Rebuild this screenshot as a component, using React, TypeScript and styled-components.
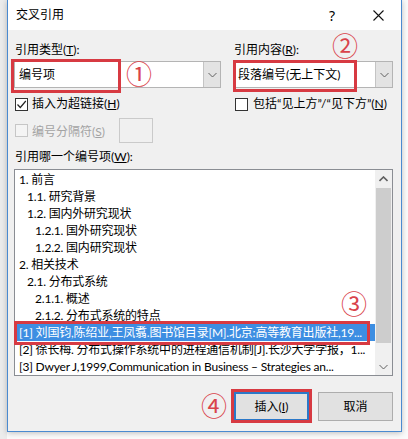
import * as React from 'react';
import styled, { createGlobalStyle } from 'styled-components';

const GlobalStyle = createGlobalStyle`
  html, body {
    margin: 0;
    padding: 0;
  }
  body {
    background: #f1f1f1;
    font-family: Lato, "Noto Sans CJK SC", sans-serif;
    font-size: 12px;
    color: #000;
  }
`;

type Entry = { text: string; level: number; selected?: boolean };

const entries: Entry[] = [
  { text: '1. 前言', level: 0 },
  { text: '1.1. 研究背景', level: 1 },
  { text: '1.2. 国内外研究现状', level: 1 },
  { text: '1.2.1. 国外研究现状', level: 2 },
  { text: '1.2.2. 国内研究现状', level: 2 },
  { text: '2. 相关技术', level: 0 },
  { text: '2.1. 分布式系统', level: 1 },
  { text: '2.1.1. 概述', level: 2 },
  { text: '2.1.2. 分布式系统的特点', level: 2 },
  { text: '[1] 刘国钧,陈绍业,王凤翥.图书馆目录[M].北京:高等教育出版社,19...', level: 0, selected: true },
  { text: '[2] 徐长梅. 分布式操作系统中的进程通信机制[J].长沙大学学报，1...', level: 0 },
  { text: '[3] Dwyer J,1999,Communication in Business – Strategies an...', level: 0 },
];

const Chevron = ({ up }: { up?: boolean }) => (
  <svg width='9' height='6' viewBox='0 0 9 6'>
    <polyline
      points={up ? '0.5,5 4.5,1 8.5,5' : '0.5,1 4.5,5 8.5,1'}
      fill='none'
      stroke='#606060'
      strokeWidth={up ? 1.6 : 1}
    />
  </svg>
);

export default function App() {
  return (
    <Page>
      <GlobalStyle />
      <Dialog>
        <TitleBar>
          <Title>交叉引用</Title>
          <TitleButton>?</TitleButton>
          <TitleButton>
            <svg width='11' height='11' viewBox='0 0 11 11'>
              <path d='M0.5 0.5 L10.5 10.5 M10.5 0.5 L0.5 10.5' stroke='#111' strokeWidth='1.1' />
            </svg>
          </TitleButton>
        </TitleBar>

        <Body>
          <Columns>
            <Field>
              <Label>
                引用类型(<u>T</u>):
              </Label>
              <Combo>
                <ComboText>编号项</ComboText>
                <ComboArrow>
                  <Chevron />
                </ComboArrow>
                <RedFrame $l={-4} $t={-3} $w={110} $h={34} />
                <Circled $x={111} $y={-2}>①</Circled>
              </Combo>
              <CheckRow>
                <Box>
                  <svg width='11' height='11' viewBox='0 0 11 11'>
                    <polyline points='1.5,5.5 4.3,8.5 9.8,2' fill='none' stroke='#222' strokeWidth='1.2' />
                  </svg>
                </Box>
                <span>
                  插入为超链接(<u>H</u>)
                </span>
              </CheckRow>
              <DisabledRow>
                <Box $disabled />
                <span>
                  编号分隔符(<u>S</u>)
                </span>
                <SmallInput />
              </DisabledRow>
            </Field>

            <Field>
              <Label>
                引用内容(<u>R</u>):
              </Label>
              <Combo>
                <ComboText>段落编号(无上下文)</ComboText>
                <ComboArrow>
                  <Chevron />
                </ComboArrow>
                <RedFrame $l={-1} $t={-2} $w={124} $h={32} />
                <Circled $x={98} $y={-30}>②</Circled>
              </Combo>
              <CheckRow $shift={2} $gap={5}>
                <Box />
                <span>
                  包括“见上方”/“见下方”(<u>N</u>)
                </span>
              </CheckRow>
            </Field>
          </Columns>

          <ListLabel>
            引用哪一个编号项(<u>W</u>):
          </ListLabel>
          <ListBox>
            <Items>
              {entries.map((e) => (
                <Item key={e.text} $level={e.level} $selected={e.selected}>
                  {e.text}
                </Item>
              ))}
            </Items>
            <ScrollBar>
              <ScrollArrow>
                <Chevron up />
              </ScrollArrow>
              <Track>
                <Thumb />
              </Track>
              <ScrollArrow>
                <Chevron />
              </ScrollArrow>
            </ScrollBar>
            <RedFrame $l={-1} $t={151} $w={356} $h={24} />
            <Circled $x={326} $y={120}>③</Circled>
          </ListBox>

          <ButtonRow>
            <ButtonSlot>
              <Button $primary>
                插入(<u>I</u>)
              </Button>
              <RedFrame $l={-3} $t={-3} $w={81} $h={34} />
              <Circled $x={-33} $y={0}>④</Circled>
            </ButtonSlot>
            <Button>取消</Button>
          </ButtonRow>
        </Body>
      </Dialog>
    </Page>
  );
}

const Page = styled.div`
  width: 408px;
  height: 439px;
  box-sizing: border-box;
  padding-left: 7px;
  overflow: hidden;
  background: linear-gradient(to right, #ececec 0, #ececec 7px, #fbfbfb 7px);
`;

const Dialog = styled.div`
  width: 395px;
  height: 432px;
  box-sizing: border-box;
  display: flex;
  flex-direction: column;
  background: #f0f0f0;
  border: 1px solid #4a8ad0;
  border-top: none;
  box-shadow: 0 1px 6px rgba(0, 0, 0, 0.25);
`;

const TitleBar = styled.div`
  height: 30px;
  flex: none;
  display: flex;
  align-items: center;
  padding-left: 8px;
  background: #fff;
`;

const Title = styled.div`
  flex: 1;
  font-size: 12px;
  line-height: 16px;
`;

const TitleButton = styled.div`
  width: 46px;
  height: 30px;
  display: flex;
  align-items: center;
  justify-content: center;
  font-family: "Noto Sans", sans-serif;
  font-size: 14px;
`;

const Body = styled.div`
  flex: 1;
  display: flex;
  flex-direction: column;
  padding: 12px 8px 0 6px;
`;

const Columns = styled.div`
  display: grid;
  grid-template-columns: 207px 160px;
  column-gap: 12px;
`;

const Field = styled.div`
  display: flex;
  flex-direction: column;
`;

const Label = styled.div`
  line-height: 16px;
  height: 16px;
  margin: 0 0 3px 1px;
  white-space: nowrap;
`;

const Combo = styled.div`
  position: relative;
  height: 27px;
  box-sizing: border-box;
  display: flex;
  background: #fff;
  border: 1px solid #b4b4b4;
`;

const ComboText = styled.div`
  flex: 1;
  padding-left: 4px;
  line-height: 25px;
  white-space: nowrap;
`;

const ComboArrow = styled.div`
  width: 16px;
  display: flex;
  align-items: center;
  justify-content: center;
  background: #e3e3e3;
  border-left: 1px solid #c4c4c4;
`;

const CheckRow = styled.div<{ $shift?: number; $gap?: number }>`
  display: flex;
  align-items: center;
  gap: ${(p) => p.$gap ?? 4}px;
  height: 16px;
  margin: 8px 0 0 ${(p) => p.$shift ?? 1}px;
  line-height: 16px;
  white-space: nowrap;
`;

const DisabledRow = styled.div`
  display: flex;
  align-items: center;
  gap: 4px;
  height: 25px;
  margin: 6px 0 0 1px;
  color: #a3a3a3;
  white-space: nowrap;
`;

const Box = styled.div<{ $disabled?: boolean }>`
  flex: none;
  width: 13px;
  height: 13px;
  box-sizing: border-box;
  display: flex;
  align-items: center;
  justify-content: center;
  background: ${(p) => (p.$disabled ? '#f4f4f4' : '#fff')};
  border: 1px solid ${(p) => (p.$disabled ? '#c6c6c6' : '#333')};
`;

const SmallInput = styled.div`
  flex: none;
  width: 34px;
  height: 25px;
  box-sizing: border-box;
  margin-left: auto;
  margin-right: 68px;
  background: #f0f0f0;
  border: 1px solid #cacaca;
`;

const ListLabel = styled.div`
  line-height: 16px;
  margin: 6px 0 0 1px;
`;

const ListBox = styled.div`
  position: relative;
  height: 207px;
  box-sizing: border-box;
  margin-top: 4px;
  display: flex;
  background: #fff;
  border: 1px solid #8a8d93;
`;

const Items = styled.div`
  flex: 1;
  min-width: 0;
  padding-top: 1px;
  overflow: hidden;
`;

const Item = styled.div<{ $level: number; $selected?: boolean }>`
  height: 17px;
  line-height: 17px;
  margin-left: 1px;
  padding-left: ${(p) => 3 + p.$level * 8}px;
  letter-spacing: -0.2px;
  white-space: nowrap;
  overflow: hidden;
  background: ${(p) => (p.$selected ? '#3d8ee2' : 'transparent')};
  color: ${(p) => (p.$selected ? '#fff' : '#000')};
`;

const ScrollBar = styled.div`
  width: 17px;
  display: flex;
  flex-direction: column;
  background: #f0f0f0;
`;

const ScrollArrow = styled.div`
  height: 17px;
  display: flex;
  align-items: center;
  justify-content: center;
`;

const Track = styled.div`
  flex: 1;
  padding: 1px 1px 0;
`;

const Thumb = styled.div`
  height: 155px;
  background: #cdcdcd;
`;

const ButtonRow = styled.div`
  display: flex;
  justify-content: flex-end;
  gap: 9px;
  margin-top: 16px;
`;

const ButtonSlot = styled.div`
  position: relative;
  display: flex;
`;

const Button = styled.div<{ $primary?: boolean }>`
  width: 75px;
  height: 29px;
  box-sizing: border-box;
  display: flex;
  align-items: center;
  justify-content: center;
  background: #e1e1e1;
  border: ${(p) => (p.$primary ? '2px solid #2b78c8' : '1px solid #adadad')};
  line-height: 16px;
`;

const RedFrame = styled.div<{ $l: number; $t: number; $w: number; $h: number }>`
  position: absolute;
  left: ${(p) => p.$l}px;
  top: ${(p) => p.$t}px;
  width: ${(p) => p.$w}px;
  height: ${(p) => p.$h}px;
  box-sizing: border-box;
  border: 3px solid #d73a42;
  pointer-events: none;
`;

const Circled = styled.span<{ $x: number; $y: number }>`
  position: absolute;
  left: ${(p) => p.$x}px;
  top: ${(p) => p.$y}px;
  font-family: "Noto Sans CJK SC", sans-serif;
  font-size: 26px;
  line-height: 26px;
  color: #d9434b;
  pointer-events: none;
`;
